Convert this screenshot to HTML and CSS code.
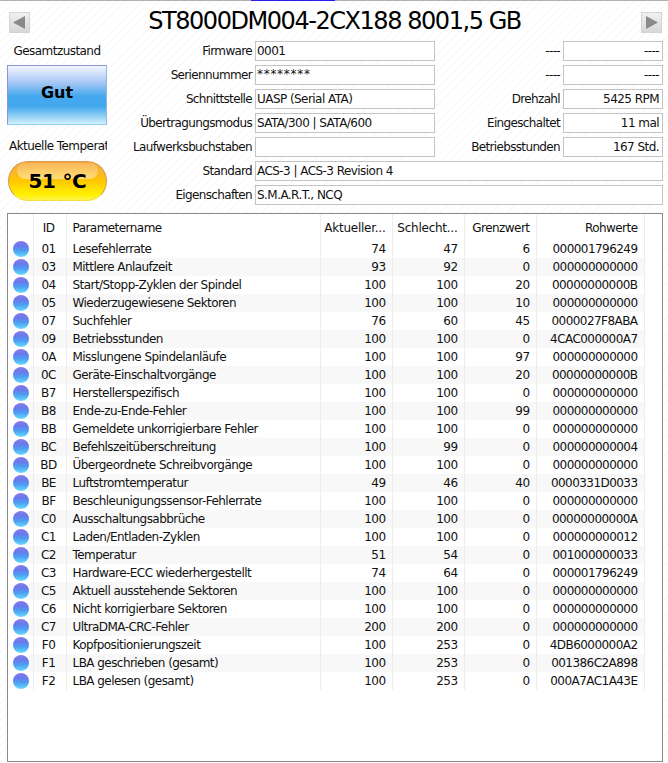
FILE: index.html
```html
<!DOCTYPE html>
<html lang="de">
<head>
<meta charset="utf-8">
<title>ST8000DM004</title>
<link rel="stylesheet" href="styles.css">
</head>
<body>
<div class="topline"><span class="tab-mark"></span></div>
<header class="titlebar">
  <button class="nav"><svg width="15" height="15" viewBox="0 0 15 15"><path d="M1 7.5 13 1v13z" fill="#8a8a8a"/></svg></button>
  <h1>ST8000DM004-2CX188 8001,5 GB</h1>
  <button class="nav"><svg width="15" height="15" viewBox="0 0 15 15"><path d="M14 7.5 2 1v13z" fill="#8a8a8a"/></svg></button>
</header>
<section class="info">
  <div class="status">
    <div class="cap">Gesamtzustand</div>
    <div class="good">Gut</div>
    <div class="cap clip">Aktuelle Temperat</div>
    <div class="temp">51 °C</div>
  </div>
  <div class="fields">
    <label>Firmware</label><div class="f">0001</div><label>----</label><div class="f r">----</div>
    <label>Seriennummer</label><div class="f serial">********</div><label>----</label><div class="f r">----</div>
    <label>Schnittstelle</label><div class="f">UASP (Serial ATA)</div><label>Drehzahl</label><div class="f r">5425 RPM</div>
    <label>Übertragungsmodus</label><div class="f">SATA/300 | SATA/600</div><label>Eingeschaltet</label><div class="f r">11 mal</div>
    <label>Laufwerksbuchstaben</label><div class="f"></div><label>Betriebsstunden</label><div class="f r">167 Std.</div>
    <label>Standard</label><div class="f wide">ACS-3 | ACS-3 Revision 4</div>
    <label>Eigenschaften</label><div class="f wide">S.M.A.R.T., NCQ</div>
  </div>
</section>
<section class="listbox">
<table>
<thead><tr><th class="ic"></th><th class="id">ID</th><th class="nm">Parametername</th><th class="ell">Aktueller...</th><th class="ell">Schlecht...</th><th>Grenzwert</th><th>Rohwerte</th></tr></thead>
<tbody>
<tr><td class="ic"><i></i></td><td class="id">01</td><td class="nm">Lesefehlerrate</td><td>74</td><td>47</td><td>6</td><td>000001796249</td></tr>
<tr><td class="ic"><i></i></td><td class="id">03</td><td class="nm">Mittlere Anlaufzeit</td><td>93</td><td>92</td><td>0</td><td>000000000000</td></tr>
<tr><td class="ic"><i></i></td><td class="id">04</td><td class="nm">Start/Stopp-Zyklen der Spindel</td><td>100</td><td>100</td><td>20</td><td>00000000000B</td></tr>
<tr><td class="ic"><i></i></td><td class="id">05</td><td class="nm">Wiederzugewiesene Sektoren</td><td>100</td><td>100</td><td>10</td><td>000000000000</td></tr>
<tr><td class="ic"><i></i></td><td class="id">07</td><td class="nm">Suchfehler</td><td>76</td><td>60</td><td>45</td><td>0000027F8ABA</td></tr>
<tr><td class="ic"><i></i></td><td class="id">09</td><td class="nm">Betriebsstunden</td><td>100</td><td>100</td><td>0</td><td>4CAC000000A7</td></tr>
<tr><td class="ic"><i></i></td><td class="id">0A</td><td class="nm">Misslungene Spindelanläufe</td><td>100</td><td>100</td><td>97</td><td>000000000000</td></tr>
<tr><td class="ic"><i></i></td><td class="id">0C</td><td class="nm">Geräte-Einschaltvorgänge</td><td>100</td><td>100</td><td>20</td><td>00000000000B</td></tr>
<tr><td class="ic"><i></i></td><td class="id">B7</td><td class="nm">Herstellerspezifisch</td><td>100</td><td>100</td><td>0</td><td>000000000000</td></tr>
<tr><td class="ic"><i></i></td><td class="id">B8</td><td class="nm">Ende-zu-Ende-Fehler</td><td>100</td><td>100</td><td>99</td><td>000000000000</td></tr>
<tr><td class="ic"><i></i></td><td class="id">BB</td><td class="nm">Gemeldete unkorrigierbare Fehler</td><td>100</td><td>100</td><td>0</td><td>000000000000</td></tr>
<tr><td class="ic"><i></i></td><td class="id">BC</td><td class="nm">Befehlszeitüberschreitung</td><td>100</td><td>99</td><td>0</td><td>000000000004</td></tr>
<tr><td class="ic"><i></i></td><td class="id">BD</td><td class="nm">Übergeordnete Schreibvorgänge</td><td>100</td><td>100</td><td>0</td><td>000000000000</td></tr>
<tr><td class="ic"><i></i></td><td class="id">BE</td><td class="nm">Luftstromtemperatur</td><td>49</td><td>46</td><td>40</td><td>0000331D0033</td></tr>
<tr><td class="ic"><i></i></td><td class="id">BF</td><td class="nm">Beschleunigungssensor-Fehlerrate</td><td>100</td><td>100</td><td>0</td><td>000000000000</td></tr>
<tr><td class="ic"><i></i></td><td class="id">C0</td><td class="nm">Ausschaltungsabbrüche</td><td>100</td><td>100</td><td>0</td><td>00000000000A</td></tr>
<tr><td class="ic"><i></i></td><td class="id">C1</td><td class="nm">Laden/Entladen-Zyklen</td><td>100</td><td>100</td><td>0</td><td>000000000012</td></tr>
<tr><td class="ic"><i></i></td><td class="id">C2</td><td class="nm">Temperatur</td><td>51</td><td>54</td><td>0</td><td>001000000033</td></tr>
<tr><td class="ic"><i></i></td><td class="id">C3</td><td class="nm">Hardware-ECC wiederhergestellt</td><td>74</td><td>64</td><td>0</td><td>000001796249</td></tr>
<tr><td class="ic"><i></i></td><td class="id">C5</td><td class="nm">Aktuell ausstehende Sektoren</td><td>100</td><td>100</td><td>0</td><td>000000000000</td></tr>
<tr><td class="ic"><i></i></td><td class="id">C6</td><td class="nm">Nicht korrigierbare Sektoren</td><td>100</td><td>100</td><td>0</td><td>000000000000</td></tr>
<tr><td class="ic"><i></i></td><td class="id">C7</td><td class="nm">UltraDMA-CRC-Fehler</td><td>200</td><td>200</td><td>0</td><td>000000000000</td></tr>
<tr><td class="ic"><i></i></td><td class="id">F0</td><td class="nm">Kopfpositionierungszeit</td><td>100</td><td>253</td><td>0</td><td>4DB6000000A2</td></tr>
<tr><td class="ic"><i></i></td><td class="id">F1</td><td class="nm">LBA geschrieben (gesamt)</td><td>100</td><td>253</td><td>0</td><td>001386C2A898</td></tr>
<tr><td class="ic"><i></i></td><td class="id">F2</td><td class="nm">LBA gelesen (gesamt)</td><td>100</td><td>253</td><td>0</td><td>000A7AC1A43E</td></tr>
</tbody>
</table>
</section>
</body>
</html>
```
FILE: styles.css
```css
* { box-sizing: border-box; }
html, body { margin: 0; height: 763px; overflow: hidden; }
body {
  font: 12px/18px "DejaVu Sans", sans-serif;
  letter-spacing: -0.55px;
  color: #111;
  background: #fff repeating-linear-gradient(135deg, #fff 0, #fff 5px, #f8f8f8 5px, #f8f8f8 6px);
  display: flex;
  flex-direction: column;
}
.topline { height: 1px; background: #b0b0b0; flex: none; padding-left: 251px; }
.tab-mark { display: block; width: 84px; height: 1px; background: #2a1cf0; }
.titlebar {
  height: 40px; flex: none;
  padding: 0 6px 0 9px;
  display: flex; align-items: center; justify-content: space-between;
}
.titlebar h1 { margin: 0 2px 0 0; font: 400 24px/40px "DejaVu Sans", sans-serif; letter-spacing: -1.45px; color: #000; }
.nav {
  width: 21px; height: 21px; padding: 0; margin-top: 2px;
  border: 1px solid #d4d4d4;
  background: linear-gradient(#f0f0f0, #d8d8d8);
  display: flex; align-items: center; justify-content: center;
}
.info { display: flex; flex: none; height: 172px; }
.status { width: 108px; flex: none; padding-left: 7px; }
.cap { width: 100px; height: 20px; text-align: center; white-space: nowrap; overflow: hidden; line-height: 20px; }
.cap.clip { margin-top: 11px; text-align: left; padding-left: 2px; }
.good {
  width: 100px; height: 60px; margin-top: 4px; padding-bottom: 4px;
  border: 1px solid #8c96cf; border-bottom-color: #8cd0f0; border-right-color: #94b8e0;
  background: linear-gradient(#f4f6ff 0%, #a8c8f4 28%, #44a8ee 52%, #44a8ee 70%, #d4f0fc 100%);
  font-weight: 700; font-size: 16px; letter-spacing: -0.1px; color: #000;
  display: flex; align-items: center; justify-content: center;
}
.temp {
  position: relative; isolation: isolate;
  width: 99px; height: 40px; margin: 5px 0 0 1px;
  border-radius: 20px;
  border: 1px solid #d89a50; border-bottom-color: #f4e040;
  background: linear-gradient(#f7a840 0%, #fcb820 30%, #ffc800 50%, #fff000 85%, #fff34a 100%);
  font-weight: 700; font-size: 20px; letter-spacing: -0.3px; color: #000;
  display: flex; align-items: center; justify-content: center;
}
.temp::before {
  content: ""; position: absolute; z-index: -1; left: 8px; right: 8px; top: 1px; height: 16px;
  border-radius: 12px 12px 14px 14px;
  background: linear-gradient(rgba(255,255,255,.15), rgba(255,255,255,.45));
}
.fields {
  flex: 1;
  display: grid;
  grid-template-columns: 144px 180px 1fr 100px;
  grid-auto-rows: 20px;
  row-gap: 4px;
  column-gap: 3px;
  padding-right: 5px;
}
.fields label { text-align: right; line-height: 20px; white-space: nowrap; letter-spacing: -0.65px; }
.f { border: 1px solid #c4c4c4; background: #fff; padding: 0 2px 0 1px; line-height: 18px; white-space: nowrap; overflow: hidden; }
.f.r { text-align: right; padding-right: 3px; }
.f.wide { grid-column: 2 / 5; }
.f.serial { letter-spacing: 0.7px; line-height: 16px; }
.listbox {
  margin: 0 5px 1px 7px; height: 549px; flex: none;
  border: 1px solid #8a8a8a;
  background: #fff;
}
table { border-collapse: collapse; table-layout: fixed; width: 636px; }
th, td { padding: 0 6px 0 0; text-align: right; font-weight: 400; white-space: nowrap; overflow: hidden; height: 18px; border-right: 1px solid #ededed; }
th { height: 26px; padding-top: 2px; }
th.ell { letter-spacing: -0.25px; }
.ic { width: 25px; padding: 0; background: #fff; }
.id { width: 33px; text-align: center; padding: 0 2px 0 0; }
.nm { width: 254px; text-align: left; padding: 0 0 0 6px; }
th.nm, th.id { padding-top: 2px; }
th:nth-child(n+4), td:nth-child(n+4) { width: 72px; }
th:last-child, td:last-child { width: 108px; }
tbody tr:nth-child(even) { background: #f8f8f8; }
tbody tr:nth-child(even) .ic { background: linear-gradient(90deg, #fff 21px, #f8f8f8 21px); }
.ic i {
  display: block; width: 16px; height: 16px; margin: 1px 0 1px 5px;
  border-radius: 50%;
  background: linear-gradient(#8a7ce6 0%, #6a78ec 30%, #4f9cf2 60%, #5ccdfa 90%, #8adcfc 100%);
}
```
